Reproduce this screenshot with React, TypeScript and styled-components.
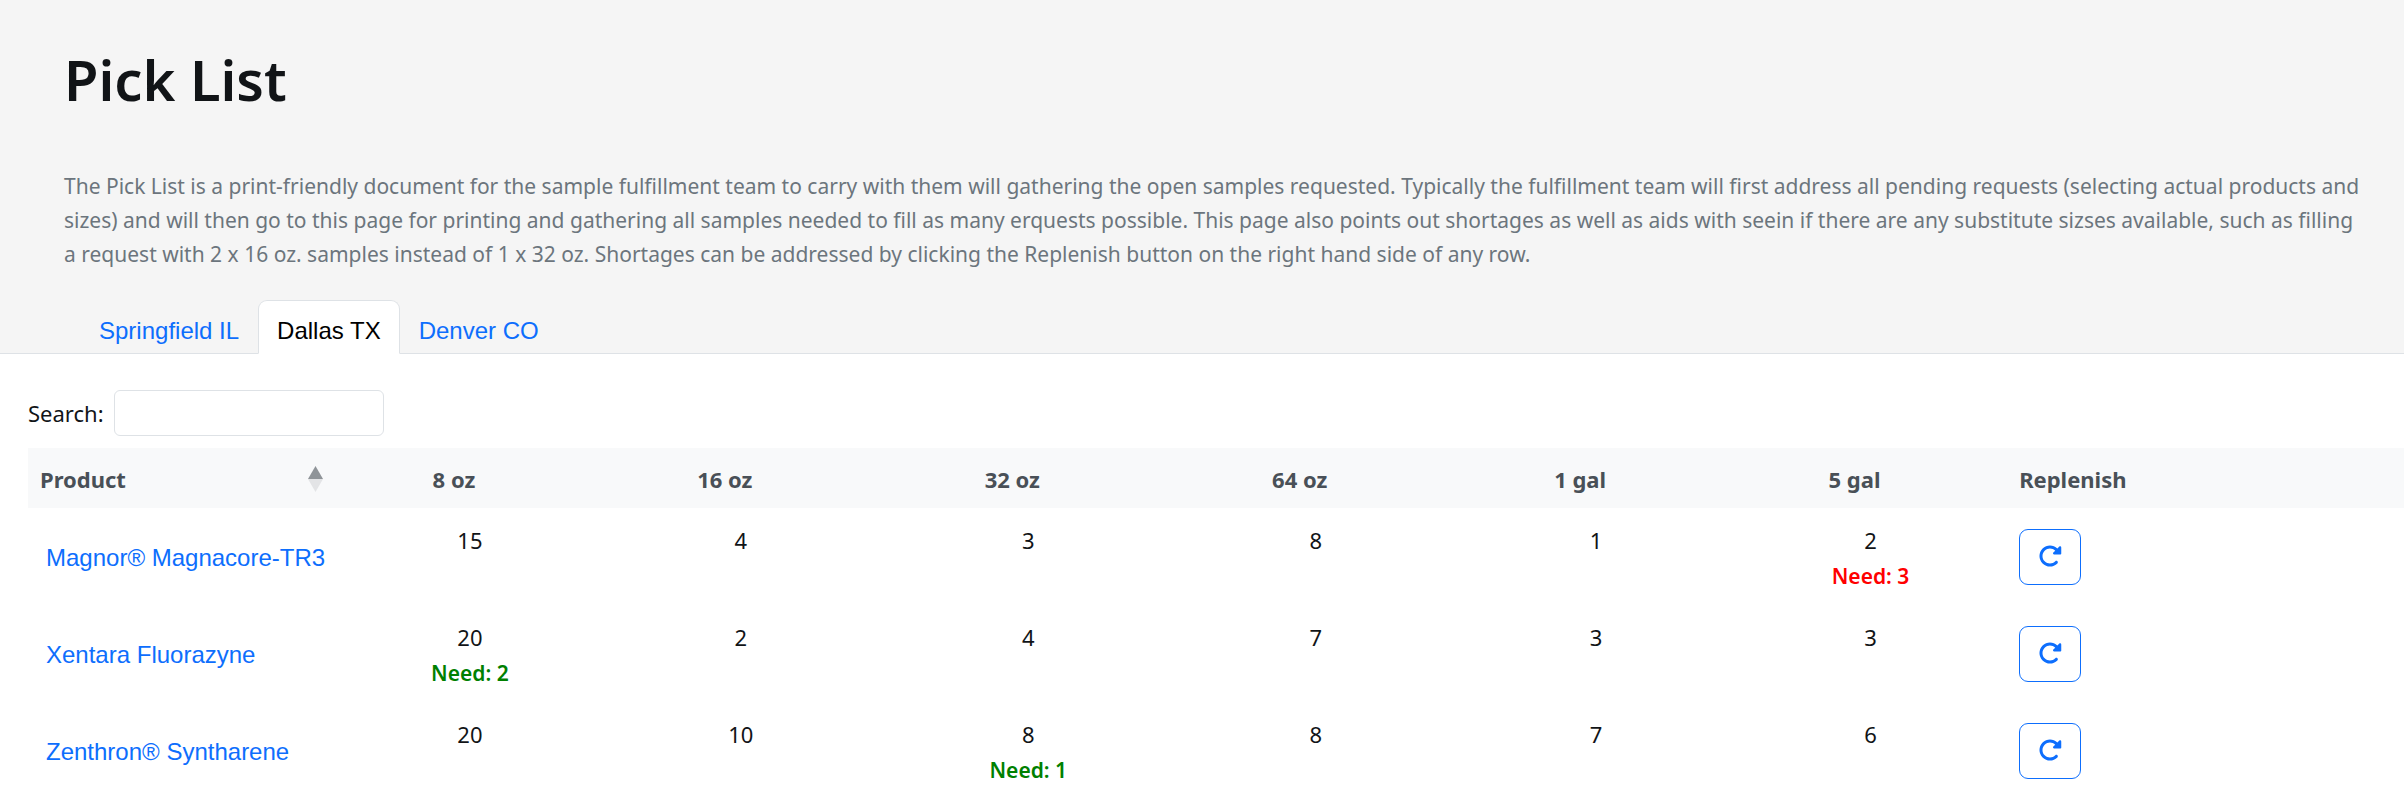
import React, { useState } from "react";
import styled, { createGlobalStyle } from "styled-components";
import { FaRotateRight } from "react-icons/fa6";

const GlobalStyle = createGlobalStyle`
  *, *::before, *::after { box-sizing: border-box; }
  body {
    margin: 0;
    background: #ffffff;
    color: #111417;
    font-family: "Segoe UI", "Noto Sans", "Open Sans", sans-serif;
    font-size: 22px;
    line-height: 34px;
  }
`;

const Page = styled.div`
  overflow-x: hidden;
`;

const Header = styled.header`
  background: #f5f5f5;
`;

const Intro = styled.div`
  padding: 43px 36px 0 64px;
`;

const Title = styled.h1`
  margin: 0 0 54px;
  font-size: 56px;
  line-height: 72px;
  font-weight: 600;
`;

const Description = styled.p`
  margin: 0 0 29px;
  font-size: 21px;
  line-height: 34px;
  color: #6c757d;
`;

const Tabs = styled.nav`
  display: flex;
  align-items: flex-end;
  padding-left: 80px;
  border-bottom: 1px solid #dee2e6;
`;

const Tab = styled.a<{ $active?: boolean }>`
  height: 54px;
  margin-bottom: -1px;
  padding: 0 18px;
  border: 1px solid ${(p) => (p.$active ? "#dee2e6" : "transparent")};
  border-bottom-color: ${(p) => (p.$active ? "#ffffff" : "transparent")};
  border-radius: 9px 9px 0 0;
  background: ${(p) => (p.$active ? "#ffffff" : "transparent")};
  color: ${(p) => (p.$active ? "#000000" : "#0d6efd")};
  font-family: Arial, "Liberation Sans", sans-serif;
  font-size: 24px;
  line-height: 60px;
  text-decoration: none;
`;

const Panel = styled.main`
  padding: 36px 0 0 28px;
`;

const SearchBar = styled.div`
  display: flex;
  align-items: center;
  gap: 10px;
  margin-bottom: 12px;
`;

const SearchInput = styled.input`
  width: 270px;
  height: 46px;
  padding: 6px 12px;
  border: 1px solid #dee2e6;
  border-radius: 6px;
  background: #ffffff;
  font: inherit;
`;

const Table = styled.table`
  width: 100%;
  table-layout: fixed;
  border-collapse: collapse;
`;

const Col = styled.col<{ $share?: string }>`
  width: ${(p) => p.$share ?? "auto"};
`;

const HeadCell = styled.th<{ $align?: "left" | "center" }>`
  height: 60px;
  padding: 1px ${(p) => (p.$align === "left" ? 12 : 44)}px 0 12px;
  background: #f8f9fa;
  color: #495057;
  font-weight: 700;
  text-align: ${(p) => p.$align ?? "center"};
`;

const SortButton = styled.button`
  display: flex;
  align-items: center;
  justify-content: space-between;
  width: 100%;
  padding: 0 7px 0 0;
  border: 0;
  background: none;
  color: inherit;
  font: inherit;
  cursor: pointer;
`;

const Row = styled.tr`
  height: 97px;
`;

const NameCell = styled.td`
  padding: 2px 12px 0 18px;
  vertical-align: middle;
`;

const ProductLink = styled.a`
  color: #0d6efd;
  font-family: Arial, "Liberation Sans", sans-serif;
  font-size: 24px;
  text-decoration: none;
`;

const StockCell = styled.td`
  padding: 14px 12px 0;
  line-height: 36px;
  text-align: center;
  vertical-align: top;
`;

const Need = styled.div<{ $short: boolean }>`
  color: ${(p) => (p.$short ? "#ff0000" : "#008000")};
  font-size: 21px;
  font-weight: 600;
`;

const ActionCell = styled.td`
  padding: 0 12px;
  vertical-align: middle;
`;

const ReplenishButton = styled.button`
  display: flex;
  align-items: center;
  justify-content: center;
  width: 62px;
  height: 56px;
  padding: 0 0 2px;
  border: 1px solid #0d6efd;
  border-radius: 9px;
  background: #ffffff;
  color: #0d6efd;
  cursor: pointer;
`;

const SortIcon = () => (
  <svg width="15" height="26" viewBox="0 0 15 26" aria-hidden="true">
    <path d="M7.5 0L15 13H0z" fill="#8f9498" />
    <path d="M0 13H15L7.5 26z" fill="#e3e4e6" />
  </svg>
);

type Stock = { qty: number; need?: number };

const locations = ["Springfield IL", "Dallas TX", "Denver CO"];
const sizes = ["8 oz", "16 oz", "32 oz", "64 oz", "1 gal", "5 gal"];
const shares = ["13.2%", "10.8%", "12%", "12.2%", "12%", "11.6%", "11.5%"];

const products: { name: string; stock: Stock[] }[] = [
  {
    name: "Magnor® Magnacore-TR3",
    stock: [{ qty: 15 }, { qty: 4 }, { qty: 3 }, { qty: 8 }, { qty: 1 }, { qty: 2, need: 3 }],
  },
  {
    name: "Xentara Fluorazyne",
    stock: [{ qty: 20, need: 2 }, { qty: 2 }, { qty: 4 }, { qty: 7 }, { qty: 3 }, { qty: 3 }],
  },
  {
    name: "Zenthron® Syntharene",
    stock: [{ qty: 20 }, { qty: 10 }, { qty: 8, need: 1 }, { qty: 8 }, { qty: 7 }, { qty: 6 }],
  },
];

export default function App() {
  const [location, setLocation] = useState("Dallas TX");

  return (
    <Page>
      <GlobalStyle />
      <Header>
        <Intro>
          <Title>Pick List</Title>
          <Description>
            The Pick List is a print-friendly document for the sample fulfillment team to carry with
            them will gathering the open samples requested. Typically the fulfillment team will
            first address all pending requests (selecting actual products and sizes) and will then
            go to this page for printing and gathering all samples needed to fill as many erquests
            possible. This page also points out shortages as well as aids with seein if there are
            any substitute sizses available, such as filling a request with 2 x 16 oz. samples
            instead of 1 x 32 oz. Shortages can be addressed by clicking the Replenish button on the
            right hand side of any row.
          </Description>
        </Intro>
        <Tabs>
          {locations.map((name) => (
            <Tab
              key={name}
              href="#"
              $active={name === location}
              onClick={(e) => {
                e.preventDefault();
                setLocation(name);
              }}
            >
              {name}
            </Tab>
          ))}
        </Tabs>
      </Header>
      <Panel>
        <SearchBar>
          <label htmlFor="search">Search:</label>
          <SearchInput id="search" type="search" />
        </SearchBar>
        <Table>
          <colgroup>
            {shares.map((share, i) => (
              <Col key={i} $share={share} />
            ))}
            <Col />
          </colgroup>
          <thead>
            <tr>
              <HeadCell $align="left" aria-sort="ascending">
                <SortButton>
                  Product
                  <SortIcon />
                </SortButton>
              </HeadCell>
              {sizes.map((size) => (
                <HeadCell key={size}>{size}</HeadCell>
              ))}
              <HeadCell $align="left">Replenish</HeadCell>
            </tr>
          </thead>
          <tbody>
            {products.map((product) => (
              <Row key={product.name}>
                <NameCell>
                  <ProductLink href="#">{product.name}</ProductLink>
                </NameCell>
                {product.stock.map((stock, i) => (
                  <StockCell key={sizes[i]}>
                    {stock.qty}
                    {stock.need !== undefined && (
                      <Need $short={stock.need > stock.qty}>Need: {stock.need}</Need>
                    )}
                  </StockCell>
                ))}
                <ActionCell>
                  <ReplenishButton aria-label={`Replenish ${product.name}`}>
                    <FaRotateRight size={24} />
                  </ReplenishButton>
                </ActionCell>
              </Row>
            ))}
          </tbody>
        </Table>
      </Panel>
    </Page>
  );
}
